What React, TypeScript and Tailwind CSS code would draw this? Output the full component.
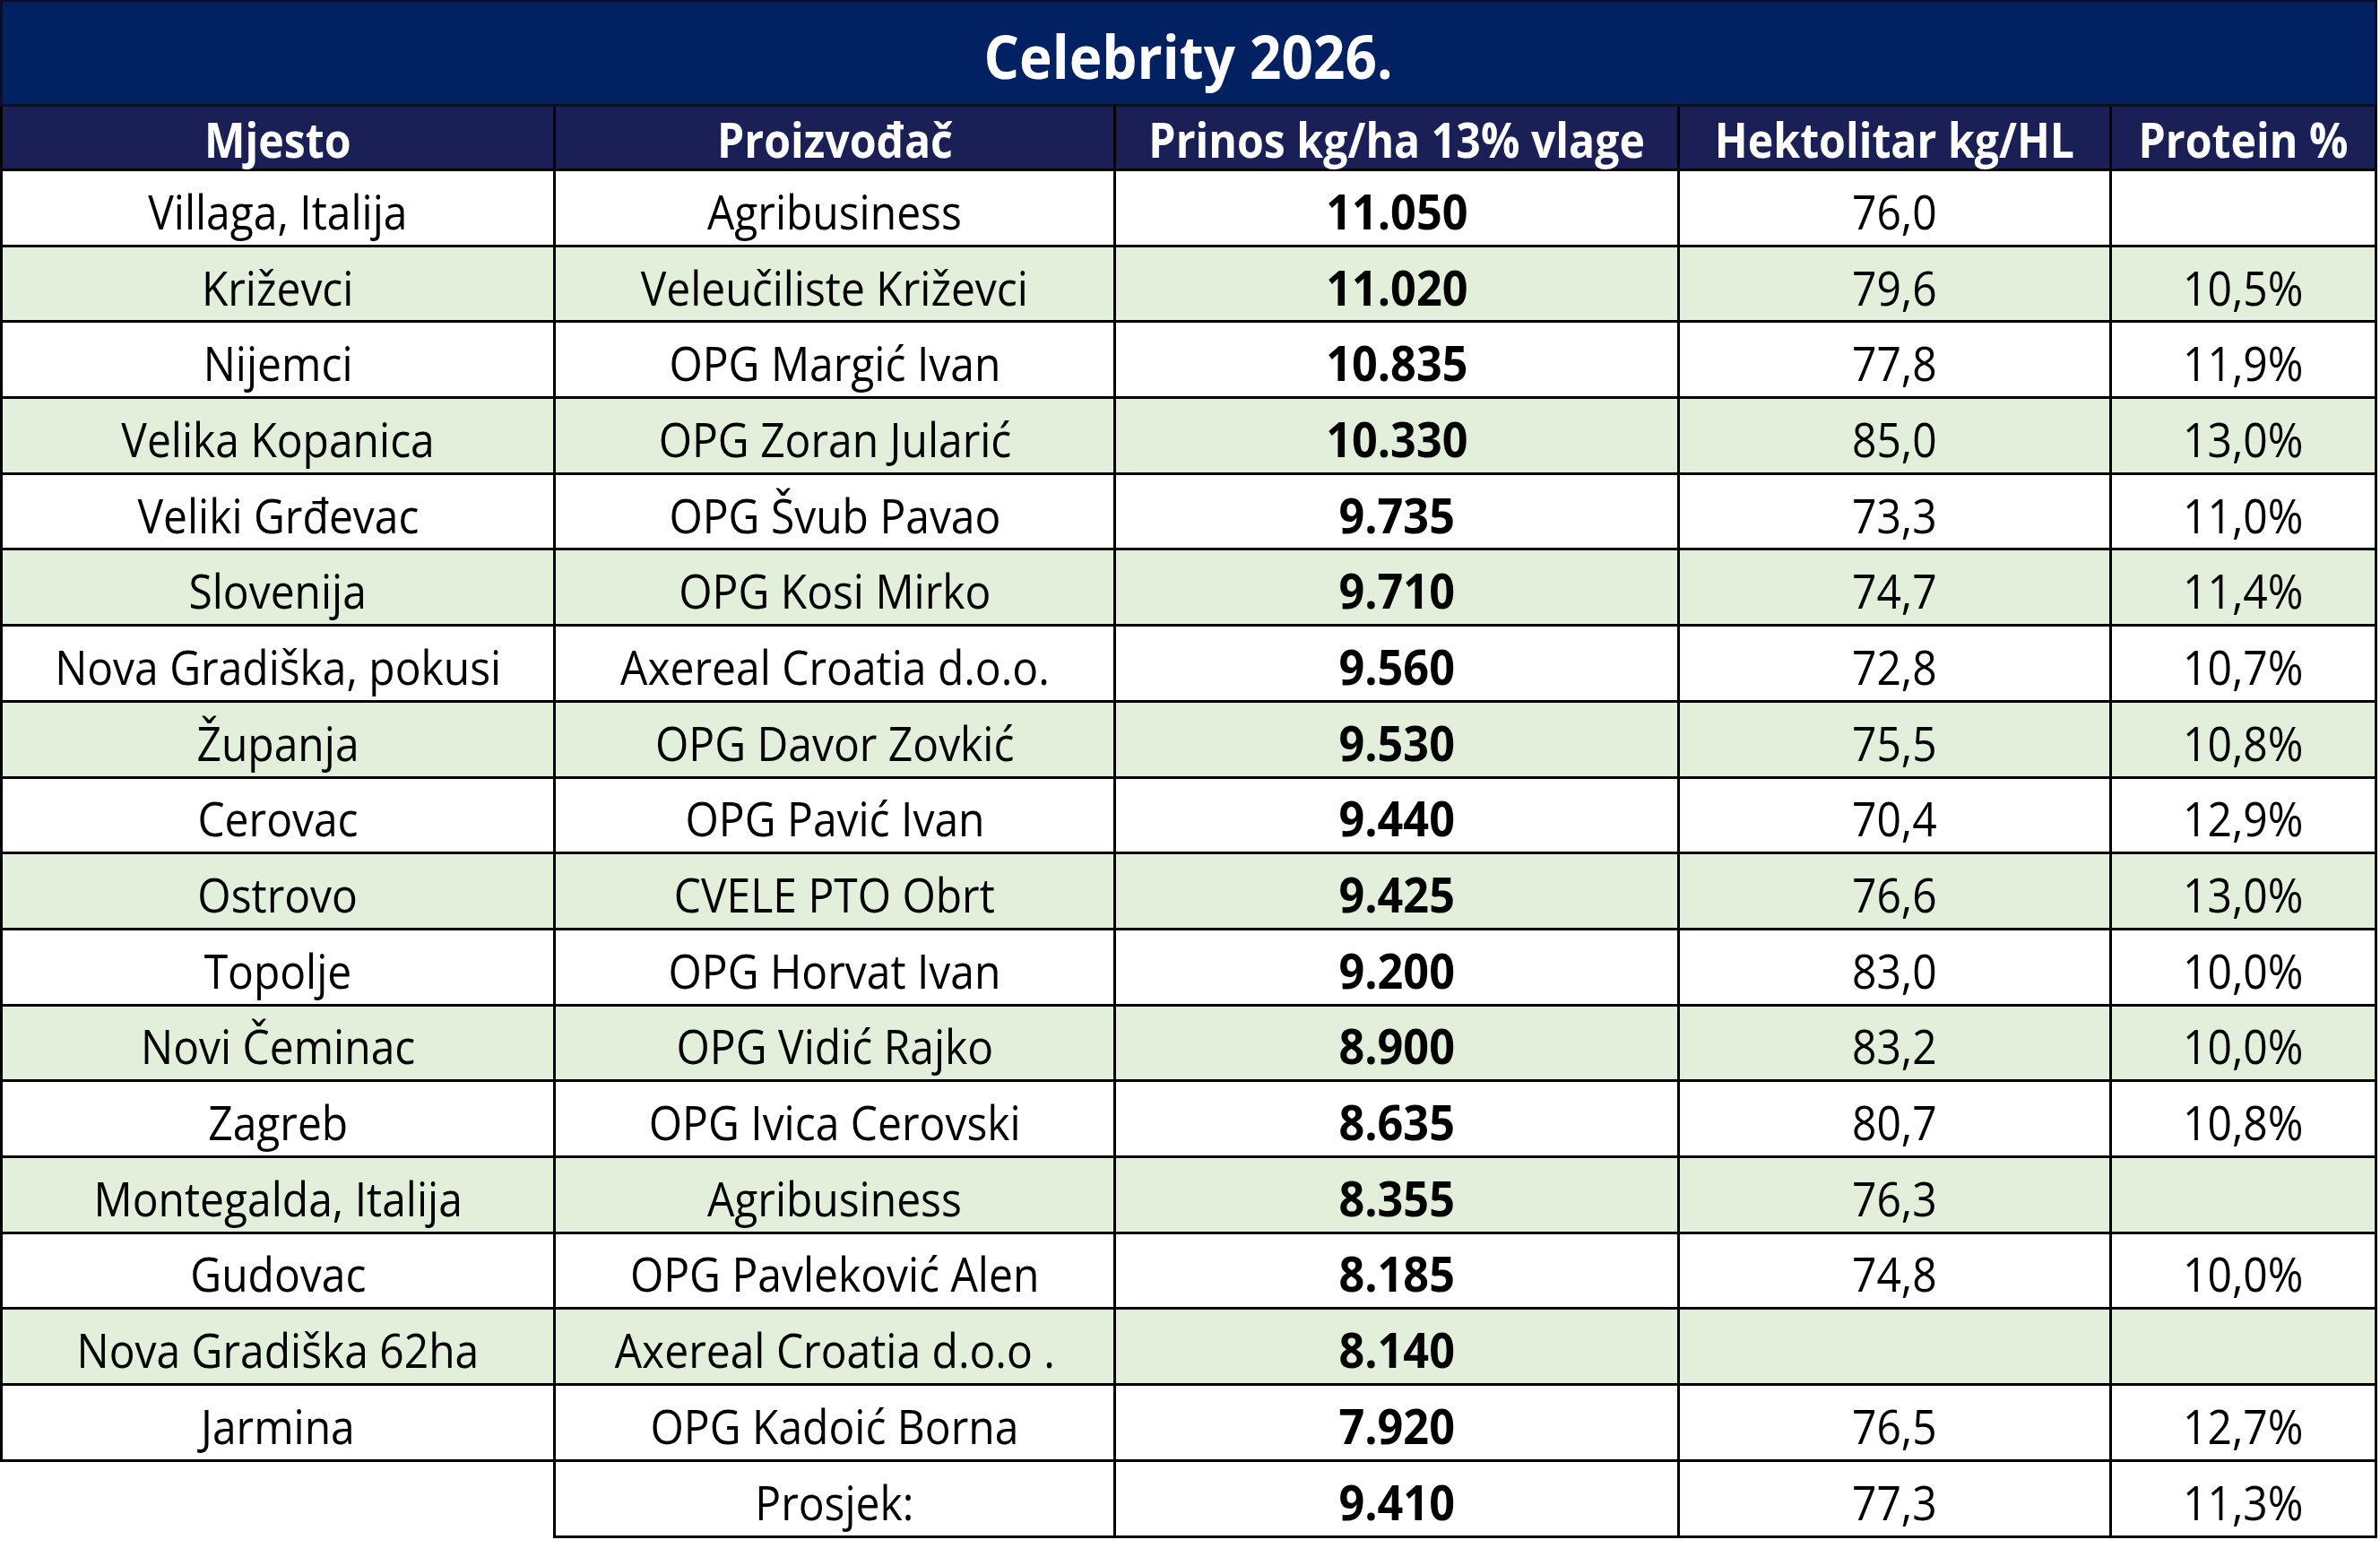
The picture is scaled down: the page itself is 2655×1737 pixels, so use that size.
import React from "react";

type Row = [string, string, string, string, string];

const rows: Row[] = [
  ["Villaga, Italija", "Agribusiness", "11.050", "76,0", ""],
  ["Križevci", "Veleučiliste Križevci", "11.020", "79,6", "10,5%"],
  ["Nijemci", "OPG Margić Ivan", "10.835", "77,8", "11,9%"],
  ["Velika Kopanica", "OPG Zoran Jularić", "10.330", "85,0", "13,0%"],
  ["Veliki Grđevac", "OPG Švub Pavao", "9.735", "73,3", "11,0%"],
  ["Slovenija", "OPG Kosi Mirko", "9.710", "74,7", "11,4%"],
  ["Nova Gradiška, pokusi", "Axereal Croatia d.o.o.", "9.560", "72,8", "10,7%"],
  ["Županja", "OPG Davor Zovkić", "9.530", "75,5", "10,8%"],
  ["Cerovac", "OPG Pavić Ivan", "9.440", "70,4", "12,9%"],
  ["Ostrovo", "CVELE PTO Obrt", "9.425", "76,6", "13,0%"],
  ["Topolje", "OPG Horvat Ivan", "9.200", "83,0", "10,0%"],
  ["Novi Čeminac", "OPG Vidić Rajko", "8.900", "83,2", "10,0%"],
  ["Zagreb", "OPG Ivica Cerovski", "8.635", "80,7", "10,8%"],
  ["Montegalda, Italija", "Agribusiness", "8.355", "76,3", ""],
  ["Gudovac", "OPG Pavleković Alen", "8.185", "74,8", "10,0%"],
  ["Nova Gradiška 62ha", "Axereal Croatia d.o.o .", "8.140", "", ""],
  ["Jarmina", "OPG Kadoić Borna", "7.920", "76,5", "12,7%"],
];

const widths = ["w-[620px]", "w-[625px]", "w-[629px]", "w-[482px]", "w-[296px]"];

function Txt({ children, kind }: { children: React.ReactNode; kind: "reg" | "num" | "head" }) {
  const cls =
    kind === "num"
      ? "font-bold scale-x-[0.95]"
      : kind === "head"
      ? "font-bold scale-x-[0.91]"
      : "font-normal scale-x-[0.905]";
  return <span className={`inline-block whitespace-nowrap origin-center ${cls}`}>{children}</span>;
}

export default function App() {
  return (
    <div
      className="w-[2655px] h-[1737px] bg-white text-black"
      style={{ fontFamily: '"Open Sans", "Noto Sans", sans-serif' }}
    >
      <div className="w-[2652px]">
        {/* Title */}
        <div className="h-[119px] bg-[#022162] border-t-[2px] border-l-[3px] border-r-[3px] border-b-[3px] border-[#0a0e2a] flex items-center justify-center text-white text-[66px] leading-none">
          <span className="inline-block whitespace-nowrap font-bold scale-x-[0.94] pt-[6px]">Celebrity 2026.</span>
        </div>
        {/* Header */}
        <div className="flex h-[72px] bg-[#1a2055] text-white text-[53px] leading-none border-b-[3px] border-black">
          {["Mjesto", "Proizvođač", "Prinos kg/ha 13% vlage", "Hektolitar kg/HL", "Protein %"].map((h, i) => (
            <div
              key={h}
              className={`${widths[i]} ${i === 0 ? "border-l-[3px]" : ""} border-r-[3px] border-black flex items-center justify-center pt-[4px]`}
            >
              <Txt kind="head">{h}</Txt>
            </div>
          ))}
        </div>
        {/* Body */}
        {rows.map((r, ri) => (
          <div
            key={ri}
            className={`flex h-[84.7px] text-[53px] leading-none border-b-[3px] border-black ${ri % 2 === 1 ? "bg-[#e2efda]" : "bg-white"}`}
          >
            {r.map((c, ci) => (
              <div
                key={ci}
                className={`${widths[ci]} ${ci === 0 ? "border-l-[3px]" : ""} border-r-[3px] border-black flex items-center justify-center pt-[7px]`}
              >
                <Txt kind={ci === 2 ? "num" : "reg"}>{c}</Txt>
              </div>
            ))}
          </div>
        ))}
        {/* Footer */}
        <div className="flex h-[85px] text-[53px] leading-none">
          <div className={`${widths[0]} border-r-[3px] border-black`} />
          {["Prosjek:", "9.410", "77,3", "11,3%"].map((c, ci) => (
            <div
              key={ci}
              className={`${widths[ci + 1]} border-r-[3px] border-b-[3px] border-black flex items-center justify-center pt-[7px]`}
            >
              <Txt kind={ci === 1 ? "num" : "reg"}>{c}</Txt>
            </div>
          ))}
        </div>
      </div>
    </div>
  );
}
